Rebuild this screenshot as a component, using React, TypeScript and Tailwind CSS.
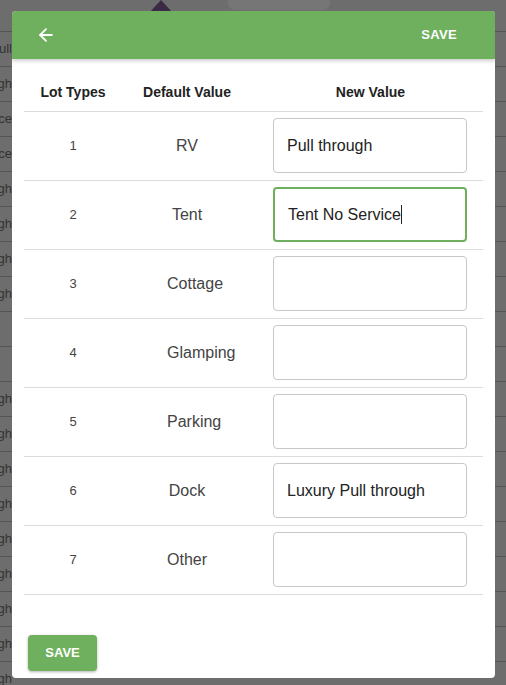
import { ArrowLeft } from 'lucide-react';

const lots = [
  { id: 1, name: 'RV', value: 'Pull through' },
  { id: 2, name: 'Tent', value: 'Tent No Service', focused: true },
  { id: 3, name: 'Cottage', value: '' },
  { id: 4, name: 'Glamping', value: '' },
  { id: 5, name: 'Parking', value: '' },
  { id: 6, name: 'Dock', value: 'Luxury Pull through' },
  { id: 7, name: 'Other', value: '' },
];

const bgLabels = ['Pull', 'through', 'Service', 'Service', 'through', 'through', 'through', 'through', '', '', 'through', 'through', 'through', 'through', 'through', 'through', 'through', 'through', 'through'];

export default function App() {
  return (
    <div className="relative w-[506px] h-[685px] overflow-hidden bg-[#6d6d6d]" style={{ fontFamily: '"Liberation Sans", Arial, sans-serif' }}>
      {/* page behind the dialog */}
      <div className="flex flex-col">
        <div className="h-[32px] flex items-start border-b border-[#555]">
          <div className="ml-[150px] w-0 h-0 border-l-[11px] border-r-[11px] border-b-[12px] border-l-transparent border-r-transparent border-b-[#3b2a45]" />
          <div className="ml-[56px] -mt-[4px] w-[102px] h-[14px] rounded-full bg-[#767676]" />
        </div>
        {bgLabels.map((label, i) => (
          <div key={i} className="h-[35px] flex items-center border-b border-[#555]">
            <div className="w-[12px] overflow-hidden flex justify-end">
              <span className="text-[13px] text-[#333] whitespace-nowrap">{label}</span>
            </div>
          </div>
        ))}
      </div>

      {/* dialog */}
      <div className="absolute left-[12px] top-[11px] w-[483px] h-[667px] bg-white rounded-[4px] flex flex-col overflow-hidden">
        <div className="h-[48px] bg-[#6fb05e] flex items-center justify-between pl-[24px] pr-[38px] shadow-[0_2px_4px_rgba(0,0,0,0.2)]">
          <ArrowLeft className="w-[20px] h-[20px] text-white" strokeWidth={2.2} />
          <span className="text-white text-[13px] font-bold tracking-[0.3px]">SAVE</span>
        </div>

        <div className="px-[12px] pt-[16px]">
          <table className="w-full border-collapse">
            <thead>
              <tr className="border-b border-[#dcdcdc] h-[36px]">
                <th className="w-[98px] text-[14px] font-bold text-[#222] text-center">Lot Types</th>
                <th className="w-[130px] text-[14px] font-bold text-[#222] text-center">Default Value</th>
                <th className="text-[14px] font-bold text-[#222] text-center pl-[6px]">New Value</th>
              </tr>
            </thead>
            <tbody>
              {lots.map((lot) => (
                <tr key={lot.id} className="border-b border-[#dcdcdc] h-[69px]">
                  <td className="text-center text-[13px] text-[#444]">{lot.id}</td>
                  <td>
                    <div className="w-[40px] mx-auto text-center whitespace-nowrap text-[16px] text-[#444]">{lot.name}</div>
                  </td>
                  <td className="pl-[21px]">
                    <div
                      className={`w-[194px] h-[55px] rounded-[4px] flex items-center px-[13px] text-[16px] text-[#222] bg-white ${
                        lot.focused ? 'border-2 border-[#6fb05e] px-[12px]' : 'border border-[#c8c8c8]'
                      }`}
                    >
                      <span>{lot.value}</span>
                      {lot.focused && <span className="w-[1px] h-[19px] bg-[#222]" />}
                    </div>
                  </td>
                </tr>
              ))}
            </tbody>
          </table>
        </div>

        <div className="mt-auto pl-[16px] pb-[7px]">
          <button className="w-[69px] h-[36px] rounded-[4px] bg-[#6fb05e] text-white text-[13px] font-bold shadow-[0_1px_3px_rgba(0,0,0,0.3)]">
            SAVE
          </button>
        </div>
      </div>
    </div>
  );
}
